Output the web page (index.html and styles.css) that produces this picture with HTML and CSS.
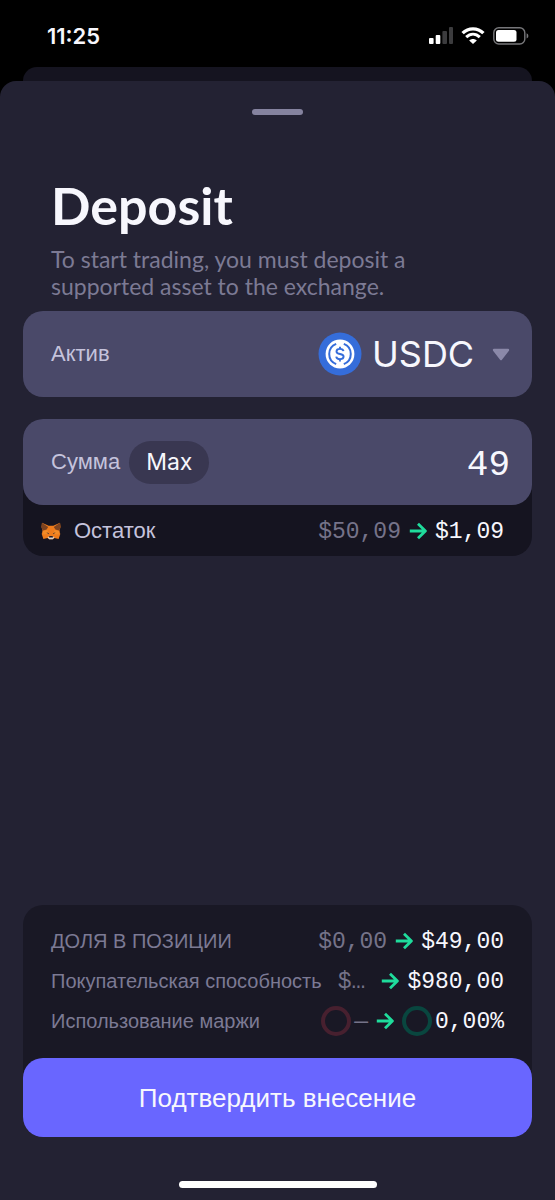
FILE: index.html
```html
<!DOCTYPE html>
<html lang="ru">
<head>
<meta charset="utf-8">
<meta name="viewport" content="width=device-width, initial-scale=1">
<title>Deposit</title>
<link rel="stylesheet" href="styles.css">
</head>
<body class="screen">
  <svg class="defs" width="0" height="0" aria-hidden="true">
    <symbol id="arrow" viewBox="0 0 18 18">
      <path d="M.8 9H16.2M9 1.7L16.4 9L9 16.3" fill="none" stroke="#1fdc9c" stroke-width="2.8" stroke-linejoin="round"/>
    </symbol>
  </svg>

  <header class="status">
    <time class="clock">11:25</time>
    <div class="indicators">
      <svg width="24" height="17" viewBox="0 0 24 17" aria-label="Signal">
        <rect x="0" y="11" width="4.6" height="6" rx="1" fill="#fff"/>
        <rect x="6.7" y="8" width="4.6" height="9" rx="1" fill="#fff"/>
        <rect x="13.4" y="4" width="4.6" height="13" rx="1" fill="#3c3c3e"/>
        <rect x="20" y="0" width="4" height="17" rx="1" fill="#3c3c3e"/>
      </svg>
      <svg width="24" height="17" viewBox="0 0 24 17" aria-label="Wi-Fi">
        <path d="M1.6 6.1C7.4.4 16.6.4 22.4 6.1" fill="none" stroke="#fff" stroke-width="3.4"/>
        <path d="M5.2 10.2C9.3 6.3 14.7 6.3 18.8 10.2" fill="none" stroke="#fff" stroke-width="3"/>
        <path d="M8.2 13.4C10.4 11.4 13.6 11.4 15.8 13.4L12 17Z" fill="#fff"/>
      </svg>
      <svg width="36" height="18" viewBox="0 0 36 18" aria-label="Battery">
        <rect x=".8" y=".8" width="31" height="16.2" rx="5" fill="none" stroke="#77777a" stroke-width="1.4"/>
        <rect x="3" y="3" width="20.5" height="11.8" rx="2.5" fill="#fff"/>
        <path d="M33.6 6.2Q35.4 7 35.4 8.9T33.6 11.6Z" fill="#77777a"/>
      </svg>
    </div>
  </header>
  <div class="back-sheet"></div>

  <main class="sheet">
    <div class="handle"></div>
    <div class="intro">
      <h1 class="title">Deposit</h1>
      <p class="subtitle">To start trading, you must deposit a supported asset to the exchange.</p>
    </div>

    <form class="form">
      <div class="field">
        <label class="label" for="asset">Актив</label>
        <div class="asset">
          <svg width="44" height="44" viewBox="0 0 44 44" aria-hidden="true">
            <circle cx="22" cy="22" r="21.5" fill="#356dda"/>
            <circle cx="22" cy="22" r="14.4" fill="#fff"/>
            <path d="M18.2 11.9A10.8 10.8 0 0 0 18.2 32.1M25.8 11.9A10.8 10.8 0 0 1 25.8 32.1" fill="none" stroke="#356dda" stroke-width="2"/>
            <path d="M25.5 19.2C25.2 17.5 23.9 16.9 22 16.9C19.9 16.9 18.5 17.8 18.5 19.4C18.5 21.2 20 21.6 22 22C24.2 22.4 25.6 22.9 25.6 24.6C25.6 26.3 24.1 27.2 22 27.2C19.8 27.2 18.5 26.4 18.2 24.6M22 14.7V17M22 27V29.4" fill="none" stroke="#356dda" stroke-width="1.9"/>
          </svg>
          <select class="asset-select" id="asset"><option>USDC</option></select>
          <svg width="18" height="13" viewBox="0 0 18 13" aria-hidden="true">
            <path d="M2 2H16L9 11Z" fill="#8b89a9" stroke="#8b89a9" stroke-width="2.4" stroke-linejoin="round"/>
          </svg>
        </div>
      </div>

      <div class="amount">
        <div class="field">
          <label class="label" for="amount">Сумма</label>
          <button class="max" type="button">Max</button>
          <input class="amount-input" id="amount" type="text" inputmode="decimal" value="49">
        </div>
        <div class="balance">
          <svg width="20" height="18" viewBox="0 0 20 18" aria-hidden="true">
            <path d="M1 .8L7.7 3.7H12.3L19 .8L19.5 5L18.4 8.9L19.3 12L17.6 17L13.5 15.9L11.8 17.2H8.2L6.5 15.9L2.4 17L.7 12L1.6 8.9L.5 5Z" fill="#ee7c1c"/>
            <path d="M1 .8L7.2 5L5.6 7.4L1.6 8.7L.5 5ZM19 .8L12.8 5L14.4 7.4L18.4 8.7L19.5 5Z" fill="#7d4320"/>
            <path d="M1.6 8.9L6.4 8.1L7.8 11.9L2.4 12.5ZM18.4 8.9L13.6 8.1L12.2 11.9L17.6 12.5Z" fill="#f28c28"/>
            <path d="M5.3 10.2L7.8 11.2L7.6 12.3ZM14.7 10.2L12.2 11.2L12.4 12.3Z" fill="#2a2430"/>
            <path d="M6.5 15.2L8.4 14.4H11.6L13.5 15.2L11.8 17.2H8.2Z" fill="#d8cfc6"/>
            <path d="M8.3 14H11.7L12 15.6H8Z" fill="#241e28"/>
          </svg>
          <span class="balance-label">Остаток</span>
          <span class="change">
            <span class="before">$50,09</span>
            <svg class="arrow" width="18" height="18"><use href="#arrow"/></svg>
            <span class="after">$1,09</span>
          </span>
        </div>
      </div>
    </form>

    <footer class="footer">
      <dl class="summary">
        <div class="row">
          <dt>ДОЛЯ В ПОЗИЦИИ</dt>
          <dd class="change">
            <span class="before">$0,00</span>
            <svg class="arrow" width="18" height="18"><use href="#arrow"/></svg>
            <span class="after">$49,00</span>
          </dd>
        </div>
        <div class="row">
          <dt>Покупательская способность</dt>
          <dd class="change wide">
            <span class="before">$…</span>
            <svg class="arrow" width="18" height="18"><use href="#arrow"/></svg>
            <span class="after">$980,00</span>
          </dd>
        </div>
        <div class="row">
          <dt>Использование маржи</dt>
          <dd class="change">
            <span class="gauge"><span class="ring ring-red"></span><span class="before">—</span></span>
            <svg class="arrow" width="18" height="18"><use href="#arrow"/></svg>
            <span class="gauge"><span class="ring ring-green"></span><span class="after">0,00%</span></span>
          </dd>
        </div>
      </dl>
      <button class="confirm" type="button">Подтвердить внесение</button>
    </footer>
    <div class="home"></div>
  </main>
</body>
</html>
```

FILE: styles.css
```css
* {
  box-sizing: border-box;
}

.screen {
  display: flex;
  flex-direction: column;
  min-height: 100vh;
  margin: 0;
  background: #000;
  color: #f7f7fd;
  font-family: "Liberation Sans", Arial, sans-serif;
}

.defs {
  position: absolute;
}

.status {
  display: flex;
  align-items: center;
  justify-content: space-between;
  height: 67px;
  padding: 4px 26px 0 47px;
}

.clock {
  font: 600 22px/24px Inter, sans-serif;
}

.indicators {
  display: flex;
  align-items: center;
  gap: 8px;
}

.back-sheet {
  height: 14px;
  margin: 0 23px;
  border-radius: 14px 14px 0 0;
  background: #151420;
}

.sheet {
  display: flex;
  flex: 1;
  flex-direction: column;
  padding: 28px 23px 12px;
  border-radius: 16px 16px 0 0;
  background: #232233;
}

.handle {
  align-self: center;
  width: 51px;
  height: 6px;
  border-radius: 3px;
  background: #85839f;
}

.intro {
  padding: 60px 28px 11px;
}

.title {
  margin: 0 0 11px;
  font: 700 52px/60px Lato, sans-serif;
}

.subtitle {
  max-width: 390px;
  margin: 0;
  color: #7c7a94;
  font: 400 23px/27px Lato, sans-serif;
}

.form {
  display: flex;
  flex-direction: column;
  gap: 22px;
}

.field {
  display: flex;
  align-items: center;
  height: 86px;
  padding: 0 22px 0 28px;
  border-radius: 20px;
  background: #4a4969;
}

.label {
  color: #c5c3dc;
  font-size: 22px;
}

.asset {
  display: flex;
  align-items: center;
  margin-left: auto;
}

.asset-select {
  margin: 0 17px 0 10px;
  padding: 0;
  border: 0;
  appearance: none;
  background: none;
  color: #f7f7fd;
  font: 400 36px/44px Inter, sans-serif;
}

.max {
  height: 43px;
  margin-left: 9px;
  padding: 0 17px;
  border: 0;
  border-radius: 22px;
  background: #393751;
  color: #f7f7fd;
  font: 400 23px/28px Inter, sans-serif;
}

.amount-input {
  flex: 1;
  width: 0;
  min-width: 0;
  padding: 8px 0 0;
  border: 0;
  background: none;
  color: #f7f7fd;
  font: 400 36px/44px "Liberation Mono", monospace;
  text-align: right;
}

.amount {
  border-radius: 20px;
  background: #151420;
}

.balance {
  display: flex;
  align-items: center;
  height: 51px;
  padding: 0 28px 0 18px;
}

.balance-label {
  margin-left: 13px;
  color: #c5c3dc;
  font-size: 22px;
}

.change {
  display: flex;
  align-items: center;
  gap: 8px;
  margin: 0 0 0 auto;
  font: 400 23px/36px "Liberation Mono", monospace;
}

.arrow {
  flex: none;
}

.before,
.after {
  padding-top: 2px;
}

.before {
  color: #757389;
}

.after {
  color: #f7f7fd;
}

.footer {
  margin-top: auto;
  border-radius: 20px;
  background: #191825;
}

.summary {
  margin: 0;
  padding: 16px 28px 17px;
}

.row {
  display: flex;
  align-items: center;
  height: 40px;
  color: #7c7a94;
  font-size: 20px;
  white-space: nowrap;
}

.wide {
  flex: 1;
  margin-left: 16px;
}

.wide .before {
  flex: 1;
}

.gauge {
  display: flex;
  align-items: center;
  gap: 3px;
}

.ring {
  width: 30px;
  height: 30px;
  border: 4px solid;
  border-radius: 50%;
}

.ring-red {
  border-color: #47202f;
}

.ring-green {
  border-color: #09463f;
}

.confirm {
  display: block;
  width: 100%;
  height: 79px;
  border: 0;
  border-radius: 20px;
  background: #6966ff;
  color: #f7f7fd;
  font: 400 26px/32px "Liberation Sans", Arial, sans-serif;
}

.home {
  align-self: center;
  width: 198px;
  height: 7px;
  margin-top: 44px;
  border-radius: 4px;
  background: #fff;
}
```
